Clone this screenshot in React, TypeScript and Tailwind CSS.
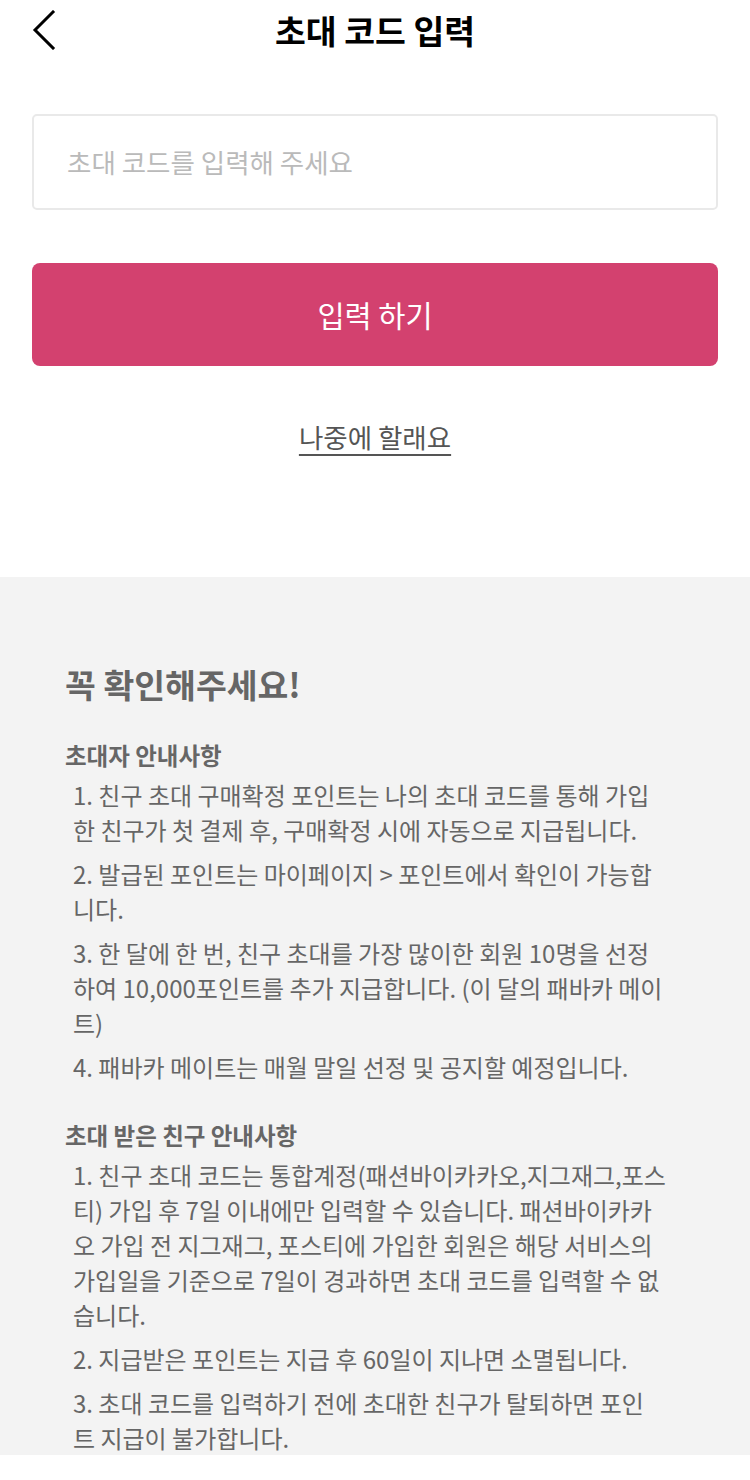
import React from "react";

const section1: string[][] = [
  ["1. 친구 초대 구매확정 포인트는 나의 초대 코드를 통해 가입", "한 친구가 첫 결제 후, 구매확정 시에 자동으로 지급됩니다."],
  ["2. 발급된 포인트는 마이페이지 > 포인트에서 확인이 가능합", "니다."],
  [
    "3. 한 달에 한 번, 친구 초대를 가장 많이한 회원 10명을 선정",
    "하여 10,000포인트를 추가 지급합니다. (이 달의 패바카 메이",
    "트)",
  ],
  ["4. 패바카 메이트는 매월 말일 선정 및 공지할 예정입니다."],
];

const section2: string[][] = [
  [
    "1. 친구 초대 코드는 통합계정(패션바이카카오,지그재그,포스",
    "티) 가입 후 7일 이내에만 입력할 수 있습니다. 패션바이카카",
    "오 가입 전 지그재그, 포스티에 가입한 회원은 해당 서비스의",
    "가입일을 기준으로 7일이 경과하면 초대 코드를 입력할 수 없",
    "습니다.",
  ],
  ["2. 지급받은 포인트는 지급 후 60일이 지나면 소멸됩니다."],
  ["3. 초대 코드를 입력하기 전에 초대한 친구가 탈퇴하면 포인", "트 지급이 불가합니다."],
];

function NoteList({ items }: { items: string[][] }) {
  return (
    <div className="mt-[4px] flex flex-col gap-[9px] pl-[8px] text-[24px] leading-[35px] text-[#666666]">
      {items.map((lines, i) => (
        <div key={i}>
          {lines.map((l, j) => (
            <div key={j} className="whitespace-nowrap">
              {l}
            </div>
          ))}
        </div>
      ))}
    </div>
  );
}

export default function App() {
  return (
    <div className="w-[750px] bg-white font-['Noto_Sans_CJK_KR',sans-serif]">
      {/* Header */}
      <div className="grid h-[60px] grid-cols-[1fr_auto_1fr] items-center">
        <div className="pl-[30px]">
          <svg width="30" height="40" viewBox="0 0 30 40" fill="none">
            <polyline points="23,2 5,20 23,38" stroke="#000" strokeWidth="3" strokeLinecap="square" strokeLinejoin="miter" />
          </svg>
        </div>
        <h1 className="text-[33.5px] font-bold leading-[40px] text-black">초대 코드 입력</h1>
        <div />
      </div>

      {/* Input */}
      <div className="mx-[32px] mt-[54px] flex h-[96px] items-center rounded-[5px] border-2 border-[#e9e9e9] bg-white pl-[33px] pr-[20px]">
        <input
          className="w-full bg-transparent text-[26.5px] text-[#333] outline-none placeholder:text-[#bababa]"
          placeholder="초대 코드를 입력해 주세요"
        />
      </div>

      {/* Button */}
      <button className="mx-[32px] mt-[53px] flex h-[103px] w-[686px] items-center justify-center rounded-[8px] bg-[#d3416f] text-[29.5px] text-white">
        입력 하기
      </button>

      {/* Later */}
      <div className="mt-[53px] text-center text-[26.5px] leading-[36px] text-[#555555]">
        <span className="underline decoration-[1.5px] underline-offset-[6px]">나중에 할래요</span>
      </div>

      {/* Notice */}
      <div className="mt-[122px] bg-[#f3f3f3] pl-[65px] pr-[30px] pt-[87px]">
        <h2 className="text-[33.5px] font-bold leading-[40px] text-[#666666]">꼭 확인해주세요!</h2>

        <h3 className="mt-[34px] text-[23.5px] font-semibold leading-[35px] text-[#666666]">초대자 안내사항</h3>
        <NoteList items={section1} />

        <h3 className="mt-[34px] text-[23.5px] font-semibold leading-[35px] text-[#666666]">초대 받은 친구 안내사항</h3>
        <NoteList items={section2} />
      </div>
      <div className="h-[22px] bg-white" />
    </div>
  );
}
